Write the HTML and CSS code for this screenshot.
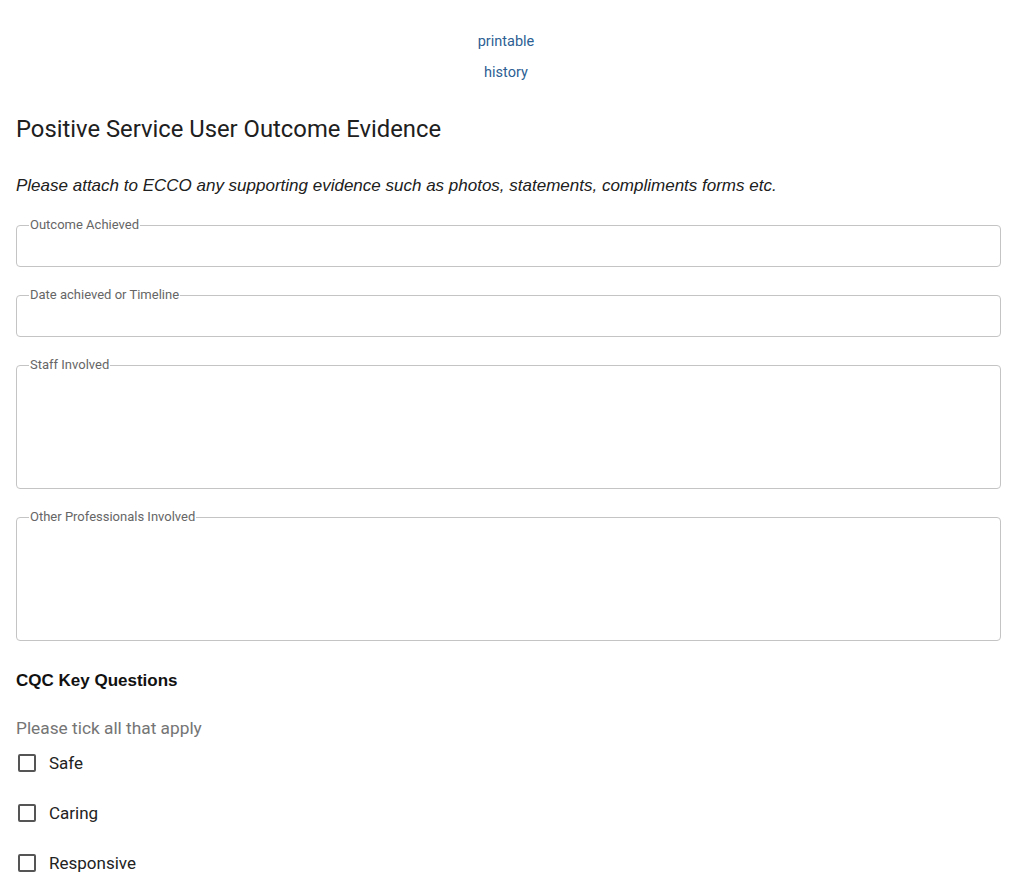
FILE: index.html
```html
<!DOCTYPE html>
<html lang="en">
<head>
    <meta charset="UTF-8">
    <meta name="viewport" content="width=device-width, initial-scale=1.0">
    <title>Positive Service User Outcome Evidence</title>
    <link rel="stylesheet" href="styles.css">
</head>
<body>
    <div class="links">
        <a href="#" class="top-link">printable</a>
        <a href="#" class="top-link">history</a>
    </div>
    <div class="form">
        <h1>Positive Service User Outcome Evidence</h1>
        <p class="note">Please attach to ECCO any supporting evidence such as photos, statements, compliments forms etc.</p>

        <fieldset class="field">
            <legend>Outcome Achieved</legend>
            <input type="text">
        </fieldset>
        <fieldset class="field">
            <legend>Date achieved or Timeline</legend>
            <input type="text">
        </fieldset>
        <fieldset class="field tall">
            <legend>Staff Involved</legend>
            <textarea></textarea>
        </fieldset>
        <fieldset class="field tall">
            <legend>Other Professionals Involved</legend>
            <textarea></textarea>
        </fieldset>

        <h3>CQC Key Questions</h3>
        <p class="hint">Please tick all that apply</p>
        <label class="check"><span class="box"></span>Safe</label>
        <label class="check"><span class="box"></span>Caring</label>
        <label class="check"><span class="box"></span>Responsive</label>
    </div>
</body>
</html>
```

FILE: styles.css
```css
body {
    font-family: 'Roboto', sans-serif;
    color: #202020;
    background: #fff;
    margin: 0;
    padding: 0;
}
.links {
    display: flex;
    flex-direction: column;
    align-items: center;
    padding-top: 32px;
    padding-right: 12px;
    gap: 11px;
}
.top-link {
    font-size: 14.5px;
    line-height: 20px;
    color: #2d5f94;
    text-decoration: none;
}
.form {
    padding: 0 23px 0 16px;
}
h1 {
    font-size: 23.8px;
    font-weight: 400;
    margin: 30px 0 0;
    line-height: 32px;
}
.note {
    font-family: 'Liberation Sans', Arial, sans-serif;
    font-style: italic;
    font-size: 17px;
    margin: 30px 0 0;
    line-height: 22px;
}
.field {
    border: 1px solid #c4c4c4;
    border-radius: 4px;
    margin: 21px 0 0;
    padding: 0 12px;
    height: 49px;
    box-sizing: border-box;
}
.field + .field {
    margin-top: 21px;
}
.field.tall {
    height: 131px;
}
.field legend {
    font-size: 13px;
    color: #666;
    padding: 0 1px;
    line-height: 14px;
}
.field input,
.field textarea {
    border: none;
    outline: none;
    width: 100%;
    background: transparent;
    resize: none;
    font: inherit;
}
h3 {
    font-family: 'Liberation Sans', Arial, sans-serif;
    font-size: 17px;
    font-weight: 700;
    margin: 30px 0 0;
    line-height: 20px;
    color: #111;
}
.hint {
    font-size: 17.3px;
    color: #757575;
    margin: 26px 0 0;
    line-height: 22px;
}
.check {
    display: flex;
    align-items: center;
    gap: 13px;
    font-size: 17px;
    color: #222;
    height: 22px;
    margin-top: 13px;
    padding-left: 2px;
}
.check + .check {
    margin-top: 28px;
}
.box {
    width: 14px;
    height: 14px;
    border: 2px solid #555;
    border-radius: 2px;
}
```
